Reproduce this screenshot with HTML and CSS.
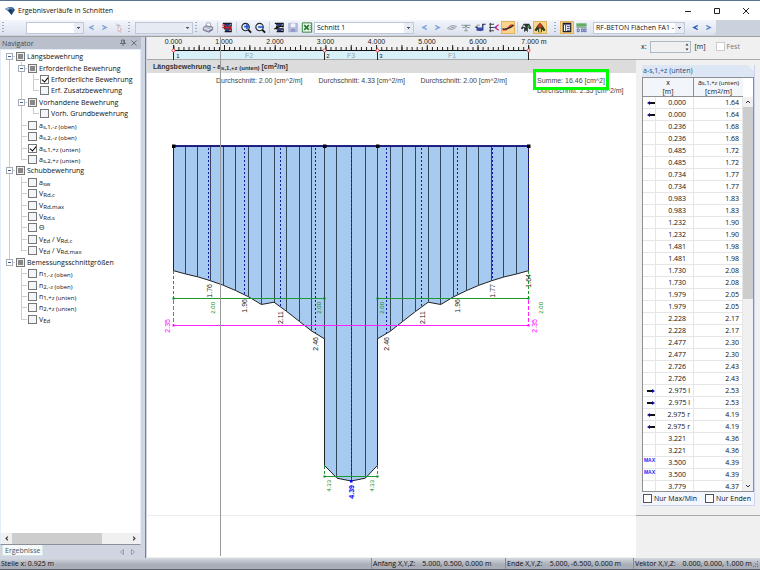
FILE: index.html
```html
<!DOCTYPE html>
<html lang="de">
<head>
<meta charset="utf-8">
<title>Ergebnisverläufe in Schnitten</title>
<link rel="stylesheet" href="styles.css">
</head>
<body>
<svg class="defs" aria-hidden="true">
  <symbol id="prev" viewBox="0 0 14 14"><path d="M10 4 4 7l6 3V8.300L7.500 7l2.500-1.300z" fill="currentColor"/></symbol>
  <symbol id="next" viewBox="0 0 14 14"><path d="M4 4l6 3-6 3V8.300L6.500 7 4 5.700z" fill="currentColor"/></symbol>
  <symbol id="start" viewBox="0 0 8 6"><path d="M2 2h6v2H2z" fill="#111"/><path d="M0 3 3 1v4z" fill="#0c0c9c"/></symbol>
  <symbol id="end" viewBox="0 0 8 6"><path d="M0 2h6v2H0z" fill="#111"/><path d="M5 1l3 2-3 2z" fill="#0c0c9c"/></symbol>
</svg>
<header class="titlebar">
  <svg class="logo" viewBox="0 0 12 10"><path d="M1 3 5 1l4 .5L11 4 7.500 9 5.500 6z" fill="#28518a"/><path d="M1 3 5 1l1 2-2 1.500z" fill="#87a9cb"/><path d="m5 1 4 .5L8 4 6 3z" fill="#4c7db4"/><path d="M4 4.500 6 3l2 1-.5 5z" fill="#173763"/></svg>
  <h1>Ergebnisverläufe in Schnitten</h1>
  <div class="window-buttons">
    <button aria-label="Minimieren"><svg viewBox="0 0 8 8"><path d="M1 4.500h6" /></svg></button>
    <button aria-label="Maximieren"><svg viewBox="0 0 8 8"><path d="M1.500 1.500h5v5h-5z"/></svg></button>
    <button aria-label="Schließen"><svg viewBox="0 0 8 8"><path d="m1 1 6 6M7 1 1 7"/></svg></button>
  </div>
</header>
<nav class="toolbar" aria-label="Werkzeuge">
  <div class="bar">
    <i class="grip"></i>
    <select class="pick first" aria-label="Lastfall"><option></option></select>
    <button class="faded" aria-label="Vorheriger"><svg><use href="#prev"/></svg></button>
    <button class="faded" aria-label="Nächster"><svg><use href="#next"/></svg></button>
    <button aria-label="Auswahl"><svg viewBox="0 0 14 14"><path d="m4 3 3 3M6 3l3 3M4 5h4" stroke="#b9b4c4" fill="none"/><path d="m6 6 4 3-2 .3L9 12l-1 .4L7 10 6 11z" fill="#fff" stroke="#d39b9b" stroke-width=".7"/></svg></button>
    <i class="grip"></i>
    <select class="pick off" aria-label="Ergebnis" disabled><option></option></select>
    <i class="grip"></i>
    <button aria-label="Drucken"><svg viewBox="0 0 14 14"><path d="m4.500 6 1-4h4l.5 4" fill="#fff" stroke="#8c93a8" stroke-width=".8"/><path d="m2 7 3-2 7 1.500v3L8 12 2 10z" fill="#b3b7c8" stroke="#5c6073" stroke-width=".8"/><path d="m2.500 7.500 6 2 3-2" stroke="#fff" stroke-width=".8" fill="none"/><path d="m8.500 10.500 2.500-1.300" stroke="#3b4fa6"/></svg></button>
    <i class="sep"></i>
    <button aria-label="Diagramme"><svg viewBox="0 0 14 14"><path d="M2.500 2.500h9v3h-7v3h7v3h-7" fill="none" stroke="#111" stroke-width="1.200"/><path d="M3 3h8l-2 2H5zM5 9h6l-2 2H5z" fill="#23357f"/><path d="M2 7h10M2 4.500h3M9 9h3" stroke="#d5152a" stroke-width="1.400"/></svg></button>
    <i class="sep"></i>
    <button aria-label="Vergrößern"><svg viewBox="0 0 14 14"><circle cx="6.500" cy="6.500" r="4" fill="#e4edfa" stroke="#222" stroke-width="1.200"/><path d="m9.500 9.500 3 3" stroke="#111" stroke-width="2"/><path d="M8 3v6M5 6h6" stroke="#2a59ca" stroke-width="1.800"/></svg></button>
    <button aria-label="Verkleinern"><svg viewBox="0 0 14 14"><circle cx="6.500" cy="6.500" r="4" fill="#e4edfa" stroke="#222" stroke-width="1.200"/><path d="m9.500 9.500 3 3" stroke="#111" stroke-width="2"/><path d="M5 6.500h6" stroke="#2a59ca" stroke-width="1.800"/></svg></button>
    <i class="sep"></i>
    <button aria-label="Bearbeiten"><svg viewBox="0 0 14 14"><path d="M2.500 2.500h9v3h-7v3h7v3h-7" fill="none" stroke="#111" stroke-width="1.200"/><path d="M3 3h8L9 5H5zM5 9h6l-2 2H5z" fill="#23357f"/><path d="m2 8.500 7-3 3 1" stroke="#111" fill="none" stroke-width="1.300"/></svg></button>
    <button aria-label="Speichern"><svg viewBox="0 0 14 14"><path d="M2.500 2.500h9v9h-9z" fill="#b8bfdf" stroke="#a4abd0"/><path d="M4.500 2.500h5v4h-5z" fill="#eef0fa"/><path d="M4.500 8.500h5v3h-5z" fill="#8f98c4"/></svg></button>
    <button aria-label="Excel"><svg viewBox="0 0 14 14"><path d="M2 2h10v10H2z" fill="#eef7ec" stroke="#2f7d38"/><path d="m4 4.500 5 5M9 4.500l-5 5" stroke="#217a2d" stroke-width="1.700"/><path d="M10 5h1M10 7h1M10 9h1" stroke="#217a2d"/></svg></button>
    <select class="pick section" aria-label="Schnitt"><option>Schnitt 1</option></select>
    <button class="faded lead" aria-label="Vorheriger Schnitt"><svg><use href="#prev"/></svg></button>
    <button class="faded" aria-label="Nächster Schnitt"><svg><use href="#next"/></svg></button>
    <button aria-label="Ansicht"><svg viewBox="0 0 14 14"><path d="M2 8q5-5 10-2-4 5-10 2z" fill="#d8dae0" stroke="#9a9ea9"/><path d="M6 8q1-2 3-1" stroke="#84888f" fill="none"/></svg></button>
    <button aria-label="Maße"><svg viewBox="0 0 14 14"><path d="M2 4.500h10M3 7h3M8 7h3M7 7v4M5 10.500h4" stroke="#8e9c9e" stroke-width="1.100"/><path d="M5 4.500 7 7l2-2.500z" fill="#6d8888"/></svg></button>
    <button aria-label="Verlauf"><svg viewBox="0 0 14 14"><path d="M2 6.500h2v3h6v-6h3" fill="none" stroke="#18204d" stroke-width="1.300"/><path d="M4 7h6v2l-2 2-4-1z" fill="#344ab6"/><path d="M3 4.500h4" stroke="#999"/></svg></button>
    <button aria-label="Werte"><svg viewBox="0 0 14 14"><path d="M3 2v10M2 3.500h5M2 7h5M2 10.500h5" stroke="#333"/><path d="m12 4-4 3 4 3" fill="none" stroke="#d42075" stroke-width="1.300"/><path d="M6 7h4" stroke="#384dce"/></svg></button>
    <button class="on" aria-label="Glätten"><svg viewBox="0 0 14 14"><path d="M1 9.500h4l5-5h3" stroke="#c2312e" stroke-width="1.400" fill="none"/><path d="M1 8.500q6 1 12-4" stroke="#223" stroke-width="1.400" fill="none"/></svg></button>
    <i class="sep small"></i>
    <button aria-label="Extremwerte"><svg viewBox="0 0 14 14"><path d="m1.500 8 3-5h6l2.500 5-2 1-2-2v5l-2-2-2 2V7l-2 2z" fill="#2b312f"/><path d="m3 6 2-2 2 3z" fill="#d8dfd8"/><path d="m8 7 2-3 1 3z" fill="#5aa35b"/></svg></button>
    <button class="on" aria-label="Mittelwerte"><svg viewBox="0 0 14 14"><path d="m1 10 3-5 3-3 3 3 3 5-2 1-2-2v3H5V9l-2 2z" fill="#263c24"/><path d="m4 7 3-5 3 5z" fill="#d43a20"/><path d="M6 8h2v4H6z" fill="#f0c444"/></svg></button>
    <i class="grip wide"></i>
    <button class="on" aria-label="Tabelle"><svg viewBox="0 0 14 14"><path d="M3 2.500h8v9H3z" fill="#fff" stroke="#1d1d29" stroke-width="1.300"/><path d="M3 4h8M5.500 4v8M7 6h3M7 8h3M7 10h3" stroke="#333f6e"/></svg></button>
    <button aria-label="Zahlenformat"><svg viewBox="0 0 14 14"><path d="M2 2.500h11v3H2z" fill="#61ae62"/><path d="M2 6.500h11" stroke="#397a3a"/><path d="M3 8.500h2v3H3zM7.500 8.500h2v3h-2zM10.500 8.500h2v3h-2z" fill="none" stroke="#3a4ca0" stroke-width=".8"/></svg></button>
    <select class="pick module" aria-label="Modul"><option>RF-BETON Flächen FA1 -</option></select>
    <button class="strong lead" aria-label="Vorheriges Modul"><svg><use href="#prev"/></svg></button>
    <button class="mid" aria-label="Nächstes Modul"><svg><use href="#next"/></svg></button>
  </div>
</nav>
<main class="workspace">
  <aside class="navigator">
    <div class="nav-head"><h2>Navigator</h2>
      <button aria-label="Anheften"><svg viewBox="0 0 8 8"><path d="M2.500 4.500V1h3v3.500M1 4.500h6M4 4.500V7M4.800 1v3"/></svg></button>
      <button aria-label="Schließen"><svg viewBox="0 0 8 8"><path d="m1.500 1.500 5 5M6.500 1.500l-5 5"/></svg></button>
    </div>
    <div class="tree-box">
      <div class="tree">
        <div class="row"><i class="g top tog"></i><label><input type="checkbox" class="mixed"><span>Längsbewehrung</span></label></div>
        <div class="row"><i class="g v"></i><i class="g t tog"></i><label><input type="checkbox" class="mixed"><span>Erforderliche Bewehrung</span></label></div>
        <div class="row"><i class="g v"></i><i class="g v"></i><i class="g t"></i><label><input type="checkbox" checked><span>Erforderliche Bewehrung</span></label></div>
        <div class="row"><i class="g v"></i><i class="g v"></i><i class="g e"></i><label><input type="checkbox"><span>Erf. Zusatzbewehrung</span></label></div>
        <div class="row"><i class="g v"></i><i class="g t tog"></i><label><input type="checkbox" class="mixed"><span>Vorhandene Bewehrung</span></label></div>
        <div class="row"><i class="g v"></i><i class="g v"></i><i class="g e"></i><label><input type="checkbox"><span>Vorh. Grundbewehrung</span></label></div>
        <div class="row"><i class="g v"></i><i class="g t"></i><label><input type="checkbox"><span>a<sub>s,1,-z (oben)</sub></span></label></div>
        <div class="row"><i class="g v"></i><i class="g t"></i><label><input type="checkbox"><span>a<sub>s,2,-z (oben)</sub></span></label></div>
        <div class="row"><i class="g v"></i><i class="g t"></i><label><input type="checkbox" checked><span>a<sub>s,1,+z (unten)</sub></span></label></div>
        <div class="row"><i class="g v"></i><i class="g e"></i><label><input type="checkbox"><span>a<sub>s,2,+z (unten)</sub></span></label></div>
        <div class="row"><i class="g t tog"></i><label><input type="checkbox" class="mixed"><span>Schubbewehrung</span></label></div>
        <div class="row"><i class="g v"></i><i class="g t"></i><label><input type="checkbox"><span>a<sub>sw</sub></span></label></div>
        <div class="row"><i class="g v"></i><i class="g t"></i><label><input type="checkbox"><span>V<sub>Rd,c</sub></span></label></div>
        <div class="row"><i class="g v"></i><i class="g t"></i><label><input type="checkbox"><span>V<sub>Rd,max</sub></span></label></div>
        <div class="row"><i class="g v"></i><i class="g t"></i><label><input type="checkbox"><span>V<sub>Rd,s</sub></span></label></div>
        <div class="row"><i class="g v"></i><i class="g t"></i><label><input type="checkbox"><span>Θ</span></label></div>
        <div class="row"><i class="g v"></i><i class="g t"></i><label><input type="checkbox"><span>V<sub>Ed</sub> / V<sub>Rd,c</sub></span></label></div>
        <div class="row"><i class="g v"></i><i class="g e"></i><label><input type="checkbox"><span>V<sub>Ed</sub> / V<sub>Rd,max</sub></span></label></div>
        <div class="row"><i class="g e tog"></i><label><input type="checkbox" class="mixed"><span>Bemessungsschnittgrößen</span></label></div>
        <div class="row"><i class="g"></i><i class="g t"></i><label><input type="checkbox"><span>n<sub>1,-z (oben)</sub></span></label></div>
        <div class="row"><i class="g"></i><i class="g t"></i><label><input type="checkbox"><span>n<sub>2,-z (oben)</sub></span></label></div>
        <div class="row"><i class="g"></i><i class="g t"></i><label><input type="checkbox"><span>n<sub>1,+z (unten)</sub></span></label></div>
        <div class="row"><i class="g"></i><i class="g t"></i><label><input type="checkbox"><span>n<sub>2,+z (unten)</sub></span></label></div>
        <div class="row"><i class="g"></i><i class="g e"></i><label><input type="checkbox"><span>V<sub>Ed</sub></span></label></div>
      </div>
      <div class="hscroll"><svg viewBox="0 0 12 12"><path d="M7.500 4 5.500 6l2 2"/></svg><i></i><svg viewBox="0 0 12 12"><path d="m4.500 4 2 2-2 2"/></svg></div>
    </div>
    <div class="tabs"><button class="tab">Ergebnisse</button>
      <svg viewBox="0 0 20 8"><path d="M5.500 1.500v5l-3-2.500zM13.500 1.500v5l3-2.500z" fill="none" stroke="#8a909c" stroke-width=".8"/></svg></div>
  </aside>
  <div class="content">
    <section class="upper">
      <svg class="ruler" role="img" aria-label="Lineal">
        <g transform="translate(-147 -37)">
          <path d="M174 51h354.500v8H174z" fill="#d8f0f8"/>
          <path d="M173.500 50.500h355" stroke="#111"/>
          <path d="M173.300 48.500h356" stroke="#222" stroke-width="3" stroke-dasharray="1 4.071"/>
          <path d="M173.300 47.500h356" stroke="#222" stroke-width="5" stroke-dasharray="1 24.350"/>
          <path d="M173.500 45v15M324.500 50v10M377.500 50v10M528.500 45v15" stroke="#222"/>
          <g class="node"><circle cx="173.500" cy="50.500" r="1.500"/><circle cx="324.500" cy="50.500" r="1.500"/><circle cx="377.500" cy="50.500" r="1.500"/><circle cx="528.500" cy="50.500" r="1.500"/></g>
          <g class="scale"><text x="173.500" y="44">0.000</text><text x="224" y="44">1.000</text><text x="275" y="44">2.000</text><text x="325.500" y="44">3.000</text><text x="376.500" y="44">4.000</text><text x="427" y="44">5.000</text><text x="478" y="44">6.000</text><text x="534" y="44">7.000 m</text></g>
          <g class="scale knot"><text x="178" y="58">1</text><text x="328" y="58">2</text><text x="381" y="58">3</text></g>
          <g class="scale field"><text x="249" y="58">F2</text><text x="351" y="58">F3</text><text x="452" y="58">F1</text></g>
        </g>
      </svg>
      <form class="position">
        <label for="xpos">x:</label>
        <span class="spin"><input id="xpos" type="text"><svg viewBox="0 0 6 10"><path d="m1.500 3.500 1.500-2 1.500 2zM1.500 6.500l1.500 2 1.500-2z" fill="#333"/></svg></span>
        <span class="unit">[m]</span>
        <label class="fest"><input type="checkbox" disabled>Fest</label>
      </form>
    </section>
    <div class="lower">
      <section class="diagram">
        <h2>Längsbewehrung - a<sub>s,1,+z (unten)</sub> [cm<sup>2</sup>/m]</h2>
        <svg class="chart" role="img" aria-label="Bewehrungsverlauf">
          <g transform="translate(-147 -73)">
            <g class="avg"><text x="216" y="83">Durchschnitt: 2.00 [cm^2/m]</text><text x="318.500" y="83">Durchschnitt: 4.33 [cm^2/m]</text><text x="420.500" y="83">Durchschnitt: 2.00 [cm^2/m]</text><text x="537" y="83">Summe: 16.46 [cm^2]</text><text x="537" y="93">Durchschnitt: 2.35 [cm^2/m]</text></g>
            <path d="M147 515.500h489" stroke="#ececec"/>
            <path class="area" d="M173.500 146V270.700L185.800 274 198.400 277 211 280.900 223.600 285.400 236.200 290.800 248.800 296.900 261.400 304.500 274 302.200 286.600 311.400 299.300 321.300 311.900 331.200 324.500 338.800V465.400L337 478.200 351.100 481 365.300 478.200 377.500 465.400V338.800L390.300 331.200 402.900 321.300 415.600 311.400 428.200 302.200 440.800 304.500 453.400 296.900 466 290.800 478.600 285.400 491.200 280.900 503.800 277 516.400 274 528.500 270.700V146z"/>
            <path class="ribs" d="M185.500 146v128M197.500 146v131M210.500 146v135M223.500 146v139M235.500 146v145M248.500 146v151M261.500 146v158M274.500 146v156M286.500 146v165M299.500 146v175M311.500 146v185M324.500 146v193M336.500 146v332M351.500 146v335M365.500 146v332M377.500 146v193M390.500 146v185M402.500 146v175M415.500 146v165M428.500 146v156M440.500 146v158M453.500 146v151M466.500 146v145M478.500 146v139M491.500 146v135M503.500 146v131M516.500 146v128"/>
            <path class="dots" d="M208.500 148v132M244.500 148v147M280.500 148v159M315.500 148v185M351.500 148v332M386.500 148v185M421.500 148v159M457.500 148v147M492.500 148v132M528.500 148v122"/>
            <path d="M173 146h356" stroke="#000080" stroke-width="1.500"/>
            <path d="M172 144.500h3.500v3.500H172zM323 144.500h3.500v3.500H323zM376 144.500h3.500v3.500H376zM527 144.500h3.500v3.500H527z" fill="#000"/>
            <g class="green"><path d="M173.500 298.500h151M377.500 298.500h151M324.500 476.500h53"/><path stroke-dasharray="3 2" d="M173.500 271v27M528.500 271v27M324.500 466v10M377.500 466v10"/></g>
            <path d="M172.500 297.500h2v2h-2zM323.500 297.500h2v2h-2zM376.500 297.500h2v2h-2zM527.500 297.500h2v2h-2zM323.500 475.500h2v2h-2zM376.500 475.500h2v2h-2z" fill="#008a1c"/>
            <rect x="173" y="325" width="356" height="1" fill="#ff20ff"/>
            <path class="magenta" stroke-dasharray="4 2" d="M173.500 300v25M528.500 300v25"/>
            <path d="M172.500 324.500h2v2h-2zM527.500 324.500h2v2h-2z" fill="#f0f"/>
            <path d="M350 480h2.500v2.500H350z" fill="#00f"/>
            <g class="values">
              <text transform="translate(212 284) rotate(-90)">1.76</text><text transform="translate(247 299) rotate(-90)">1.96</text><text transform="translate(283 311) rotate(-90)">2.11</text><text transform="translate(318 337) rotate(-90)">2.46</text><text transform="translate(389 337) rotate(-90)">2.46</text><text transform="translate(425 311) rotate(-90)">2.11</text><text transform="translate(460 299) rotate(-90)">1.96</text><text transform="translate(495 284) rotate(-90)">1.77</text><text transform="translate(531 274) rotate(-90)">1.64</text>
              <g class="small"><text transform="translate(215 302) rotate(-90)">2.00</text><text transform="translate(321 302) rotate(-90)">2.00</text><text transform="translate(384 302) rotate(-90)">2.00</text><text transform="translate(543 302) rotate(-90)">2.00</text><text transform="translate(331 480) rotate(-90)">4.33</text><text transform="translate(374 480) rotate(-90)">4.33</text></g>
              <g class="total"><text transform="translate(170 319) rotate(-90)">2.35</text><text transform="translate(537 319) rotate(-90)">2.35</text></g>
              <text class="max" transform="translate(354 485) rotate(-90)">4.39</text>
            </g>
          </g>
        </svg>
      </section>
      <section class="results">
        <div class="card">
          <h3>a-s,1,+z (unten)</h3>
          <div class="table-box">
            <table>
              <colgroup><col class="mark"><col class="xcol"><col></colgroup>
              <thead><tr><th colspan="2">x<br>[m]</th><th>a<sub>s,1,+z (unten)</sub><br>[cm<sup>2</sup>/m]</th></tr></thead>
              <tbody>
                <tr><td><svg><use href="#start"/></svg></td><td>0.000</td><td>1.64</td></tr>
                <tr><td><svg><use href="#start"/></svg></td><td>0.000</td><td>1.64</td></tr>
                <tr><td></td><td>0.236</td><td>1.68</td></tr>
                <tr><td></td><td>0.236</td><td>1.68</td></tr>
                <tr><td></td><td>0.485</td><td>1.72</td></tr>
                <tr><td></td><td>0.485</td><td>1.72</td></tr>
                <tr><td></td><td>0.734</td><td>1.77</td></tr>
                <tr><td></td><td>0.734</td><td>1.77</td></tr>
                <tr><td></td><td>0.983</td><td>1.83</td></tr>
                <tr><td></td><td>0.983</td><td>1.83</td></tr>
                <tr><td></td><td>1.232</td><td>1.90</td></tr>
                <tr><td></td><td>1.232</td><td>1.90</td></tr>
                <tr><td></td><td>1.481</td><td>1.98</td></tr>
                <tr><td></td><td>1.481</td><td>1.98</td></tr>
                <tr><td></td><td>1.730</td><td>2.08</td></tr>
                <tr><td></td><td>1.730</td><td>2.08</td></tr>
                <tr><td></td><td>1.979</td><td>2.05</td></tr>
                <tr><td></td><td>1.979</td><td>2.05</td></tr>
                <tr><td></td><td>2.228</td><td>2.17</td></tr>
                <tr><td></td><td>2.228</td><td>2.17</td></tr>
                <tr><td></td><td>2.477</td><td>2.30</td></tr>
                <tr><td></td><td>2.477</td><td>2.30</td></tr>
                <tr><td></td><td>2.726</td><td>2.43</td></tr>
                <tr><td></td><td>2.726</td><td>2.43</td></tr>
                <tr><td><svg><use href="#end"/></svg></td><td class="side">2.975 l</td><td>2.53</td></tr>
                <tr><td><svg><use href="#end"/></svg></td><td class="side">2.975 l</td><td>2.53</td></tr>
                <tr><td><svg><use href="#start"/></svg></td><td class="side">2.975 r</td><td>4.19</td></tr>
                <tr><td><svg><use href="#start"/></svg></td><td class="side">2.975 r</td><td>4.19</td></tr>
                <tr><td></td><td>3.221</td><td>4.36</td></tr>
                <tr><td></td><td>3.221</td><td>4.36</td></tr>
                <tr><td><b>MAX</b></td><td>3.500</td><td>4.39</td></tr>
                <tr><td><b>MAX</b></td><td>3.500</td><td>4.39</td></tr>
                <tr><td></td><td>3.779</td><td>4.37</td></tr>
              </tbody>
            </table>
            <div class="vscroll"><svg viewBox="0 0 10 10"><path d="m3 6 2-2 2 2"/></svg><i></i><svg viewBox="0 0 10 10"><path d="m3 4 2 2 2-2"/></svg></div>
          </div>
          <div class="filters"><label><input type="checkbox">Nur Max/Min</label><label><input type="checkbox">Nur Enden</label></div>
        </div>
      </section>
    </div>
    <i class="cursor"></i>
    <i class="highlight"></i>
  </div>
</main>
<footer class="status">
  <span class="place">Stelle x: 0.925 m</span>
  <span class="from"><span>Anfang X,Y,Z:</span><span>5.000, 0.500, 0.000 m</span></span>
  <span class="to"><span>Ende X,Y,Z:</span><span>5.000, -6.500, 0.000 m</span></span>
  <span class="vector"><span>Vektor X,Y,Z:</span><span>0.000, 0.000, 1.000 m</span></span>
  <svg viewBox="0 0 10 10"><path d="M7 2h1v1H7zM5 4.500h1v1H5zM7 4.500h1v1H7zM3 7h1v1H3zM5 7h1v1H5zM7 7h1v1H7z" fill="#666c78"/></svg>
</footer>
</body>
</html>
```
FILE: styles.css
```css
* { box-sizing: border-box; }
body {
  margin: 0;
  height: 100vh;
  display: flex;
  flex-direction: column;
  overflow: hidden;
  font: 7px/11px "Open Sans", sans-serif;
  color: #111;
  background: #cfd6e2;
}
h1, h2, h3 { margin: 0; font-weight: normal; font-size: inherit; }
button { border: 0; padding: 0; background: none; font: inherit; color: inherit; }
i { font-style: normal; display: block; }
svg { display: block; }
sub, sup { line-height: 0; }
.defs { position: absolute; width: 0; height: 0; }

input[type="checkbox"] {
  appearance: none;
  flex: none;
  width: 9px;
  height: 9px;
  margin: 0 2px 0 1px;
  border: 1px solid #555;
  background: #fff;
}

/* title bar */
.titlebar {
  display: flex;
  align-items: center;
  height: 20px;
  flex: none;
  padding-left: 4px;
  border-top: 1px solid #5a7390;
  background: #fff;
}
.logo { width: 12px; height: 10px; margin-right: 2px; }
.titlebar h1 { flex: 1; font-size: 7px; }
.window-buttons { display: flex; }
.window-buttons button { width: 29px; height: 16px; display: grid; place-items: center; }
.window-buttons svg { width: 8px; height: 8px; fill: none; stroke: #222; stroke-width: 1; }

/* toolbar */
.toolbar { flex: none; height: 17px; background: #cbd1dd; border-bottom: 1px solid #a0a0a0; }
.bar {
  display: flex;
  align-items: center;
  width: 716px;
  height: 15px;
  background: linear-gradient(#f3f6fb, #dbe1ee);
  border-radius: 0 0 4px 0;
}
.bar button { width: 14px; height: 13px; flex: none; color: #7fa3dc; }
.bar button svg { width: 14px; height: 13px; }
.bar button.strong { color: #275cc0; }
.bar button.mid { color: #6388cc; }
.bar button.lead { margin-left: 3px; }
.bar button.on { background: #fcd58c; box-shadow: inset 0 0 0 1px #e2b25c; }
.grip {
  width: 2px;
  height: 11px;
  flex: none;
  margin: 0 4px 0 2px;
  background: repeating-linear-gradient(#a3adbf 0 1px, transparent 1px 3px);
}
.grip.wide { margin: 0 4px 0 7px; }
.sep { width: 1px; height: 11px; flex: none; margin: 0 2px; background: #c5cddb; }
.sep.small { margin: 0 1px 0 2px; }
.pick {
  appearance: none;
  width: 58px;
  height: 12px;
  flex: none;
  margin: 0;
  padding: 0 0 0 2px;
  border: 1px solid #bfc8d8;
  border-radius: 0;
  font: inherit;
  line-height: 10px;
  color: #111;
  background:
    linear-gradient(#555, #555) right 3px top 4px / 3px 1px no-repeat,
    linear-gradient(#555, #555) right 4px top 5px / 1px 1px no-repeat,
    linear-gradient(#e6ebf4, #e6ebf4) right / 9px 100% no-repeat,
    #fff;
}
.pick.first { margin-left: 18px; }
.pick.off { margin-left: 1px; background-color: #e6eaf2; opacity: 1; }
.pick.section { width: 100px; }
.pick.module { width: 92px; margin-left: 5px; }

/* workspace */
.workspace { flex: 1; min-height: 0; display: flex; }
.navigator { width: 146px; flex: none; display: flex; flex-direction: column; padding-right: 4px; border-right: 1px solid #7b8089; }
.nav-head { display: flex; align-items: center; height: 12px; flex: none; padding: 0 2px; background: #b9c0cc; color: #444b58; }
.nav-head h2 { flex: 1; }
.nav-head button { width: 11px; height: 8px; }
.nav-head svg { width: 8px; height: 8px; margin: auto; fill: none; stroke: #555d6a; stroke-width: .8; }
.tree-box { flex: 1; min-height: 0; display: flex; flex-direction: column; justify-content: space-between; background: #fff; border: 1px solid #e4ecf8; border-bottom: 1px solid #8a8f99; }
.tree { display: grid; grid-auto-rows: 1fr; height: 275px; padding: 1px 0 0 2px; }
.row { display: flex; white-space: nowrap; }
.row label { display: flex; align-items: center; }
.row input { margin-right: 2px; border-color: #777; }
.row input:not(:checked):not(.mixed) { background: #f2f5f9; }
.row .mixed { background: linear-gradient(#888, #888) center / 5px 5px no-repeat #eee; }
.row sub, th sub, .diagram sub { font-size: 6px; vertical-align: baseline; position: relative; top: 1px; }
input[type="checkbox"]:checked {
  background: #fff;
  position: relative;
}
input[type="checkbox"]:checked::after {
  content: "";
  position: absolute;
  left: 2px;
  top: 0;
  width: 3px;
  height: 5px;
  border: solid #000;
  border-width: 0 1px 1px 0;
  transform: rotate(40deg);
}
.g { width: 12px; flex: none; position: relative; background-repeat: no-repeat; }
.v { background-image: linear-gradient(#ccc, #ccc); background-size: 1px 100%; background-position: 6px 0; }
.t { background-image: linear-gradient(#ccc, #ccc), linear-gradient(#ccc, #ccc); background-size: 1px 100%, 6px 1px; background-position: 6px 0, 6px 50%; }
.e { background-image: linear-gradient(#ccc, #ccc), linear-gradient(#ccc, #ccc); background-size: 1px 50%, 6px 1px; background-position: 6px 0, 6px 50%; }
.top { background-image: linear-gradient(#ccc, #ccc), linear-gradient(#ccc, #ccc); background-size: 1px 50%, 6px 1px; background-position: 6px 100%, 6px 50%; }
.tog { display: grid; place-items: center; padding-left: 1px; }
.tog::before { content: ""; width: 5px; height: 5px; border: 1px solid #a6adb8; background: linear-gradient(#3b5a9a, #3b5a9a) center / 3px 1px no-repeat #fff; }
.hscroll { display: flex; height: 11px; background: #f0f0f0; }
.hscroll svg { width: 11px; height: 11px; fill: none; stroke: #333; stroke-width: 1.2; }
.hscroll i { width: 90px; background: #cdcdcd; }
.hscroll svg:last-child { margin-left: auto; }
.tabs { display: flex; justify-content: space-between; height: 13px; flex: none; padding: 0 3px 2px 2px; }
.tab { padding: 0 2px; background: #f5faf8; border: 1px solid #dbe5e6; border-top: 0; border-radius: 0 0 2px 2px; line-height: 9px; color: #4b5563; }
.tabs svg { width: 20px; height: 8px; margin-top: 3px; }

.content { flex: 1; min-width: 0; display: flex; flex-direction: column; position: relative; padding-bottom: 1px; margin-left: 1px; background: #f0f0f0; }
.upper { display: flex; height: 23px; flex: none; border-bottom: 1px solid #a8a8a8; }
.ruler { flex: 1; height: 23px; }
text { font: 7px "Liberation Sans", sans-serif; fill: #222; }
.scale text { text-anchor: middle; }
.knot text { font-size: 6px; }
.scale.field text { fill: #8fa5b0; }
.node { fill: #fff; stroke: #e8404a; stroke-width: 1; }
.position { display: flex; align-items: center; width: 119px; flex: none; padding-bottom: 3px; }
.spin { display: flex; width: 41px; height: 12px; margin: 0 4px 0 3px; border: 1px solid #adb8c8; }
.spin input { flex: 1; min-width: 0; border: 0; padding: 0; background: #f0f0f0; }
.spin svg { width: 6px; height: 10px; }
.unit { width: 20px; }
.fest { display: flex; align-items: center; color: #777; }
.fest input[type="checkbox"] { border-color: #ccc; }

.lower { flex: 1; min-height: 0; display: flex; }
.diagram { flex: 1; min-width: 0; display: flex; flex-direction: column; background: #fff; }
.diagram h2 { flex: none; height: 13px; padding: 1px 0 0 6px; background: #dcdcdc; font: bold 7px/12px "Liberation Sans", sans-serif; color: #333; }
.diagram sup, th sup { font-size: 6px; vertical-align: 2px; }
.chart { flex: 1; min-height: 0; width: 100%; }
.area { fill: #a6caf0; stroke: #222; stroke-width: 1; }
.ribs { stroke: #33475c; stroke-width: 1; }
.dots { stroke: #1919a8; stroke-width: 1; stroke-dasharray: 2 2; }
.green { stroke: #1f9a2f; stroke-width: 1; fill: none; }
.magenta { stroke: #ff20ff; stroke-width: 1; fill: none; }
.values text { text-anchor: end; }
.values .small text { font-size: 6px; fill: #0a8a1a; }
.values .total text { fill: #f0f; }
.values .max { fill: #00f; font-weight: bold; }
.avg text { fill: #444; }
.cursor { position: absolute; left: 73px; top: 0; bottom: 2px; width: 1px; background: #9a9a9a; }
.highlight { position: absolute; left: 386px; top: 32px; width: 76px; height: 21px; border: 3px solid #0f0; }

/* results */
.results { width: 124px; flex: none; padding: 5px 5px 0 6px; }
.card { border-right: 1px solid #cfd3f3; }
.card h3 { height: 12px; padding-left: 1px; background: #dce6f4; color: #274c7e; clip-path: polygon(0 0, 105px 0, 100% 6px, 100% 100%, 0 100%); }
.table-box { display: flex; height: 415px; overflow: hidden; border: 1px solid #8f8f8f; background: #fff; position: relative; }
table { flex: 1; align-self: flex-start; table-layout: fixed; border-collapse: separate; border-spacing: 0; }
.mark { width: 13px; }
.xcol { width: 38px; }
th { height: 19px; padding: 0; font-weight: normal; line-height: 9px; background: #f2f5fa; border-right: 1px solid #8f8f8f; border-bottom: 1px solid #8f8f8f; }
th sub { top: 0; }
th sup { vertical-align: 1px; }
th:last-child { border-right: 0; }
td { height: 12px; padding: 0; line-height: 11px; border-right: 1px solid #e6e6e6; border-bottom: 1px solid #e6e6e6; text-align: right; }
td:nth-child(2) { padding-right: 7px; }
td.side { padding-right: 3px; }
td:last-child { padding-right: 3px; }
td svg { width: 8px; height: 6px; margin-left: 4px; }
td b { display: block; height: 11px; font: bold 5px/7px "Liberation Sans", sans-serif; color: #22f; }
.vscroll { display: flex; flex-direction: column; width: 10px; flex: none; margin-top: 19px; background: #f0f0f0; }
.vscroll svg { width: 10px; height: 10px; fill: none; stroke: #333; stroke-width: 1; }
.vscroll i { height: 192px; background: #cdcdcd; }
.vscroll svg:last-child { margin-top: auto; }
.filters { display: flex; height: 14px; background: #f3f6fc; border-bottom: 1px solid #cfd3f3; }
.filters label { display: flex; align-items: center; width: 62px; flex: none; white-space: nowrap; }
.filters label:last-child { width: 50px; }
.results::after { content: ""; display: block; margin: 9px -5px 0 -6px; border-top: 1px solid #a8a8a8; }

/* status bar */
.status { display: flex; align-items: center; flex: none; height: 12px; background: linear-gradient(#d5d9e0, #a9aeb8 60%); border-bottom: 1px solid #5d626b; color: #111; white-space: nowrap; }
.status > span { padding-left: 1px; }
.place { flex: 1; }
.from, .to, .vector { display: flex; gap: 7px; border-left: 1px solid #858b97; }
.from { width: 134px; }
.to { width: 128px; }
.vector { width: 117px; }
.status svg { width: 10px; height: 10px; }
```
